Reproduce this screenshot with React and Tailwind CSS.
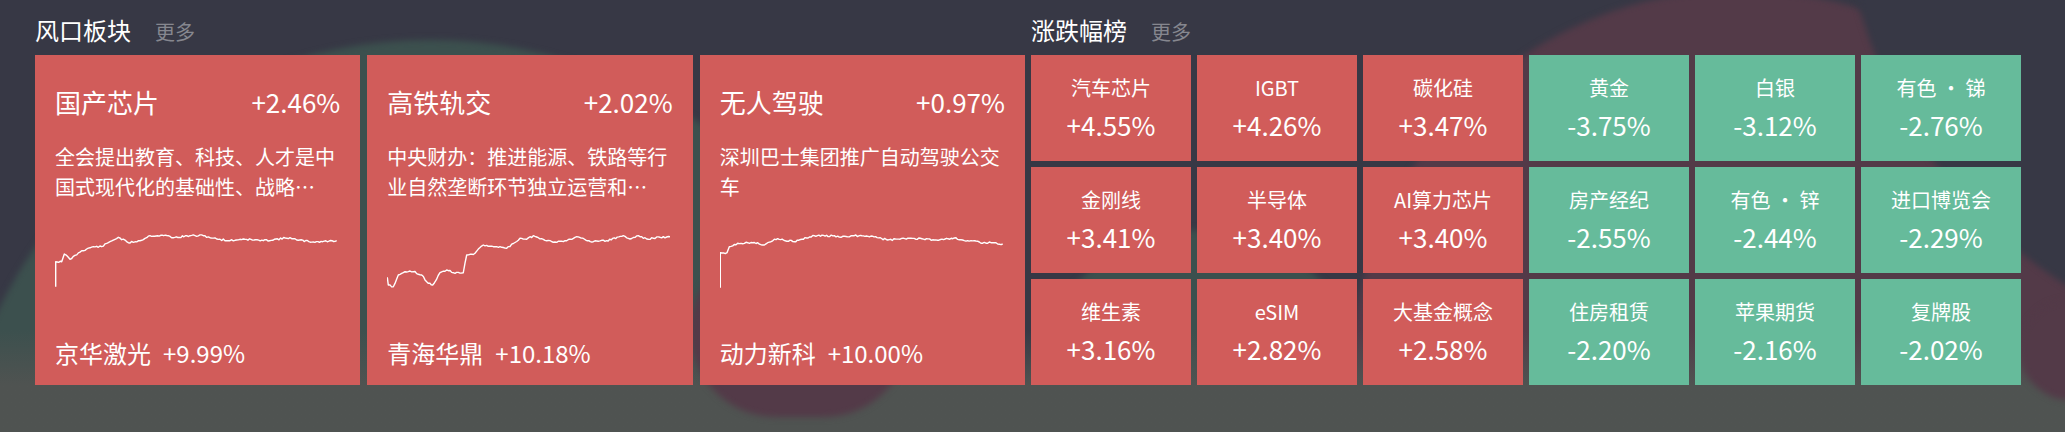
import React from "react";

const FONT = { fontFamily: '"Noto Sans CJK SC", "Noto Sans", sans-serif' };

function jag(points, seed) {
  let s = seed;
  const rnd = () => {
    s = (s * 9301 + 49297) % 233280;
    return s / 233280;
  };
  let d = `M${points[0][0]} ${points[0][1]}`;
  for (let i = 1; i < points.length; i++) {
    const [x0, y0] = points[i - 1];
    const [x1, y1] = points[i];
    const dx = x1 - x0;
    const n = Math.max(1, Math.floor(Math.abs(dx) / 1.5));
    for (let k = 1; k <= n; k++) {
      const t = k / n;
      const x = x0 + dx * t;
      const noise = k < n && Math.abs(dx) > 2 ? (rnd() - 0.5) * 1.8 : 0;
      const y = y0 + (y1 - y0) * t + noise;
      d += ` L${x.toFixed(1)} ${y.toFixed(1)}`;
    }
  }
  return d;
}

const chart1 = [[0.7,56.7],[0.7,31.7],[6.7,31.7],[9.3,24],[15,29.3],[26.7,20.7],[38.3,16.7],[46.7,16.7],[55,11.7],[63.3,7.3],[73.3,12.7],[85,10.7],[95,5.7],[113.3,5.7],[118.3,7.7],[135,5.7],[148.3,5.7],[161.7,9],[175,10.7],[188.3,9],[208.3,10.7],[235,7.7],[241.7,10],[258.3,12],[281.7,10.7]];
const chart2 = [[0.3,47.3],[1.3,55],[6.3,56.7],[11.3,45],[18,41.7],[26.3,41.7],[34.7,45],[39.7,51.7],[45.7,55],[53,42.7],[59.7,40],[66.3,42.7],[76.3,42.7],[79.7,25],[88,23.3],[96.3,15],[109.7,16.7],[119.7,18.3],[133,8.3],[139.7,9.3],[146.3,5.7],[156.3,9.3],[166.3,12.3],[179.7,10.7],[189.7,6.7],[206.3,11.7],[219.7,10.7],[236.3,5.7],[243,9],[251.3,5.7],[259.7,9],[273,7.3],[283,6.7]];
const chart3 = [[0.3,57.7],[0.3,22.7],[7,22.7],[9.3,16.7],[17.7,13.3],[27.7,12.7],[37.7,12.7],[42.7,15],[47.7,12.7],[57.7,8.7],[74.3,11.7],[94.3,5.7],[114.3,5.7],[121,7.3],[134.3,5.7],[151,6],[167.7,10],[191,8.3],[214.3,10],[234.3,8],[244.3,10.7],[254.3,10.7],[261,13.3],[271,12.7],[282.7,14]];

const boards = [
  { name: "国产芯片", pct: "+2.46%", desc: "全会提出教育、科技、人才是中国式现代化的基础性、战略…", stock: "京华激光", stockPct: "+9.99%", chart: chart1, seed: 11 },
  { name: "高铁轨交", pct: "+2.02%", desc: "中央财办：推进能源、铁路等行业自然垄断环节独立运营和…", stock: "青海华鼎", stockPct: "+10.18%", chart: chart2, seed: 23 },
  { name: "无人驾驶", pct: "+0.97%", desc: "深圳巴士集团推广自动驾驶公交车", stock: "动力新科", stockPct: "+10.00%", chart: chart3, seed: 37 },
];

const tiles = [
  ["汽车芯片", "+4.55%", true], ["IGBT", "+4.26%", true], ["碳化硅", "+3.47%", true],
  ["黄金", "-3.75%", false], ["白银", "-3.12%", false], ["有色 ・ 锑", "-2.76%", false],
  ["金刚线", "+3.41%", true], ["半导体", "+3.40%", true], ["AI算力芯片", "+3.40%", true],
  ["房产经纪", "-2.55%", false], ["有色 ・ 锌", "-2.44%", false], ["进口博览会", "-2.29%", false],
  ["维生素", "+3.16%", true], ["eSIM", "+2.82%", true], ["大基金概念", "+2.58%", true],
  ["住房租赁", "-2.20%", false], ["苹果期货", "-2.16%", false], ["复牌股", "-2.02%", false],
];

function Header({ title }) {
  return (
    <div className="flex items-baseline h-[41px]">
      <span className="text-[24px] leading-[32px] text-white">{title}</span>
      <span className="ml-[24px] text-[20px] leading-[32px] text-[#86878f]">更多</span>
    </div>
  );
}

function BoardCard({ b }) {
  return (
    <div className="bg-[#d15c5a] h-[330px] flex flex-col pt-[29px] pl-[20px] pr-[20px] pb-[16px] text-white">
      <div className="flex justify-between items-baseline text-[26px] leading-[36px]">
        <span>{b.name}</span>
        <span>{b.pct}</span>
      </div>
      <div className="mt-[22px] text-[20px] leading-[30px] h-[60px] overflow-hidden">{b.desc}</div>
      <svg className="mt-[28px] block" width="285" height="60" viewBox="0 0 285 60">
        <path d={jag(b.chart, b.seed)} fill="none" stroke="#ffffff" strokeWidth="1.4" strokeLinejoin="round" />
      </svg>
      <div className="mt-auto flex items-baseline text-[24px] leading-[32px]">
        <span>{b.stock}</span>
        <span className="ml-[12px]">{b.stockPct}</span>
      </div>
    </div>
  );
}

function Tile({ t }) {
  const [name, pct, up] = t;
  return (
    <div className={`${up ? "bg-[#d15c5a]" : "bg-[#66bb9b]"} h-[106px] flex flex-col items-center justify-center text-white`}>
      <div className="text-[20px] leading-[28px] whitespace-pre">{name}</div>
      <div className="mt-[5px] text-[26px] leading-[36px]">{pct}</div>
    </div>
  );
}

export default function App() {
  return (
    <div className="relative w-[2065px] h-[432px] overflow-hidden bg-[#373845]" style={FONT}>
      {/* decorative blurred background */}
      <div className="absolute left-[-50px] top-[40px] w-[960px] h-[960px] rounded-full bg-[#3c504e] blur-[3px]" />
      <div className="absolute left-[1030px] top-[230px] w-[340px] h-[340px] rounded-full bg-[#3c504e] blur-[3px]" />
      <div className="absolute left-[1350px] top-[-10px] w-[780px] h-[880px] rounded-full bg-[#533a48] blur-[3px]" />
      <div className="absolute left-[1842px] top-[-598px] w-[956px] h-[956px] rounded-full bg-[#373845] blur-[3px]" />
      <div className="absolute left-0 right-0 top-[330px] bottom-0 bg-gradient-to-b from-[#4f535100] to-[#4f5351] to-[55px]" />
      <div className="absolute left-[690px] top-[245px] w-[220px] h-[172px] rounded-full bg-[#533a48] blur-[3px]" />
      <div className="absolute left-[2020px] top-[300px] w-[120px] h-[100px] rounded-full bg-[#533a48] blur-[3px]" />

      <div className="relative pt-[14px] pl-[35px] grid grid-cols-[990px_990px] gap-x-[6px]">
        <div>
          <Header title="风口板块" />
          <div className="grid grid-cols-3 gap-x-[7px]">
            {boards.map((b) => (
              <BoardCard key={b.name} b={b} />
            ))}
          </div>
        </div>
        <div>
          <Header title="涨跌幅榜" />
          <div className="grid grid-cols-6 gap-[6px]">
            {tiles.map((t) => (
              <Tile key={t[0]} t={t} />
            ))}
          </div>
        </div>
      </div>
    </div>
  );
}
